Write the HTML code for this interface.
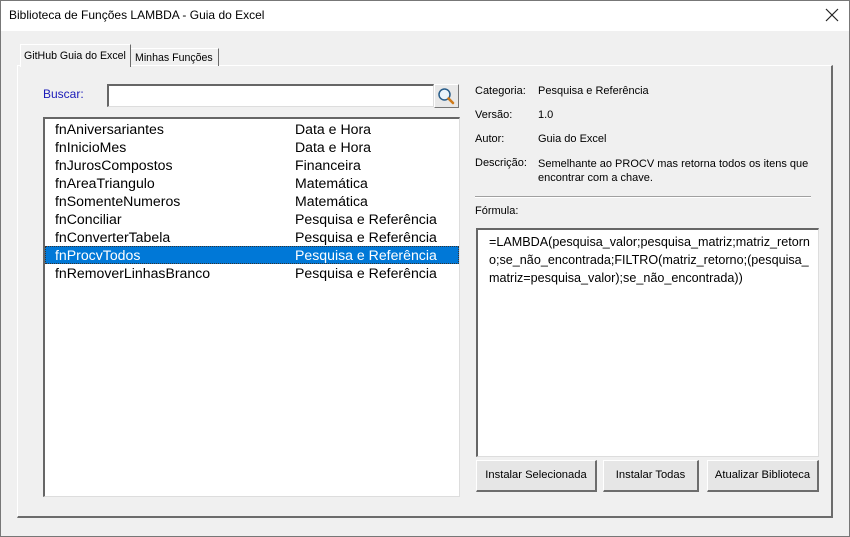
<!DOCTYPE html>
<html><head><meta charset="utf-8"><style>
*{margin:0;padding:0;box-sizing:border-box}
body{width:850px;height:537px;background:#f0f0f0;font-family:"Liberation Sans","DejaVu Sans",sans-serif;position:relative;overflow:hidden}
.a{position:absolute}
.t{font-size:11px;color:#000;white-space:nowrap}
.title{left:0;top:0;width:850px;height:31px;background:#fff}
.row{position:absolute;left:0;width:414px;height:18px;font-size:14.1px;line-height:18px}
.row span{position:absolute;left:10px}
.row b{font-weight:normal;position:absolute;left:250px}
.btn{position:absolute;top:460px;height:32px;background:#e6e6e6;border:1px solid #fff;border-right:2px solid #6d6d6d;border-bottom:2px solid #6d6d6d;font-size:11.2px;text-align:center;line-height:29px}
</style></head><body>
<div class="a title"></div>
<div class="a" style="left:0;top:0;width:850px;height:537px;border:1px solid #777"></div>
<div class="a t" style="left:9px;top:8px;font-size:12px">Biblioteca de Funções LAMBDA - Guia do Excel</div>
<svg class="a" style="left:825px;top:8px" width="14" height="14"><path d="M1 1L13 13M13 1L1 13" stroke="#222" stroke-width="1.2"/></svg>
<div class="a" style="left:17px;top:65px;width:816px;height:453px;border:1px solid #fff;border-right:2px solid #6b6b6b;border-bottom:2px solid #6b6b6b"></div>
<div class="a" style="left:20px;top:44px;width:111px;height:23px;background:#f0f0f0;border:1px solid #fff;border-bottom:none;border-right:1px solid #6b6b6b"></div>
<div class="a t" style="left:24px;top:50px;font-size:10.6px">GitHub Guia do Excel</div>
<div class="a" style="left:131px;top:48px;width:88px;height:18px;border-top:1px solid #fff;border-right:1px solid #6b6b6b"></div>
<div class="a t" style="left:135px;top:52px;font-size:10.6px">Minhas Funções</div>
<div class="a t" style="left:43px;top:87px;color:#1a1ab8;font-size:12px">Buscar:</div>
<div class="a" style="left:107px;top:84px;width:327px;height:23px;background:#fff;border-right:1px solid #ddd;border-bottom:1px solid #ddd;border-top:2px solid #666;border-left:2px solid #666"></div>
<div class="a" style="left:434px;top:84px;width:25px;height:24px;background:#e8e8e8;border:1px solid #fff;border-right:1px solid #777;border-bottom:1px solid #777"></div>
<svg class="a" style="left:436px;top:86px" width="20" height="20"><circle cx="8.5" cy="8.5" r="5.5" fill="#eaf4fb" stroke="#2a5e8a" stroke-width="1.5"/><path d="M12.5 12.5L17 17" stroke="#d07b1a" stroke-width="2.6" stroke-linecap="round"/></svg>
<div class="a" style="left:43px;top:117px;width:417px;height:380px;background:#fff;border-top:2px solid #666;border-left:2px solid #666;border-right:1px solid #ddd;border-bottom:1px solid #ddd">
<div class="row" style="top:1px"><span>fnAniversariantes</span><b>Data e Hora</b></div>
<div class="row" style="top:19px"><span>fnInicioMes</span><b>Data e Hora</b></div>
<div class="row" style="top:37px"><span>fnJurosCompostos</span><b>Financeira</b></div>
<div class="row" style="top:55px"><span>fnAreaTriangulo</span><b>Matemática</b></div>
<div class="row" style="top:73px"><span>fnSomenteNumeros</span><b>Matemática</b></div>
<div class="row" style="top:91px"><span>fnConciliar</span><b>Pesquisa e Referência</b></div>
<div class="row" style="top:109px"><span>fnConverterTabela</span><b>Pesquisa e Referência</b></div>
<div class="row" style="top:127px;background:#0078d7;color:#fff;outline:1px dotted #333;outline-offset:-1px"><span>fnProcvTodos</span><b>Pesquisa e Referência</b></div>
<div class="row" style="top:145px"><span>fnRemoverLinhasBranco</span><b>Pesquisa e Referência</b></div>
</div>
<div class="a t" style="left:475px;top:85px">Categoria:</div><div class="a t" style="left:538px;top:85px">Pesquisa e Referência</div>
<div class="a t" style="left:475px;top:109px">Versão:</div><div class="a t" style="left:538px;top:109px">1.0</div>
<div class="a t" style="left:475px;top:133px">Autor:</div><div class="a t" style="left:538px;top:133px">Guia do Excel</div>
<div class="a t" style="left:475px;top:157px">Descrição:</div><div class="a t" style="left:538px;top:157px;line-height:14px">Semelhante ao PROCV mas retorna todos os itens que<br>encontrar com a chave.</div>
<div class="a" style="left:475px;top:196px;width:336px;height:2px;border-top:1px solid #a0a0a0;border-bottom:1px solid #fff"></div>
<div class="a t" style="left:475px;top:205px">Fórmula:</div>
<div class="a" style="left:476px;top:228px;width:343px;height:229px;background:#fff;border-top:2px solid #666;border-left:2px solid #666;border-right:1px solid #ddd;border-bottom:1px solid #ddd"></div>
<div class="a" style="left:489px;top:233px;font-size:12.6px;line-height:18px;white-space:nowrap">=LAMBDA(pesquisa_valor;pesquisa_matriz;matriz_retorn<br>o;se_não_encontrada;FILTRO(matriz_retorno;(pesquisa_<br>matriz=pesquisa_valor);se_não_encontrada))</div>
<div class="btn" style="left:476px;width:121px">Instalar Selecionada</div>
<div class="btn" style="left:603px;width:96px">Instalar Todas</div>
<div class="btn" style="left:707px;width:112px">Atualizar Biblioteca</div>
</body></html>
